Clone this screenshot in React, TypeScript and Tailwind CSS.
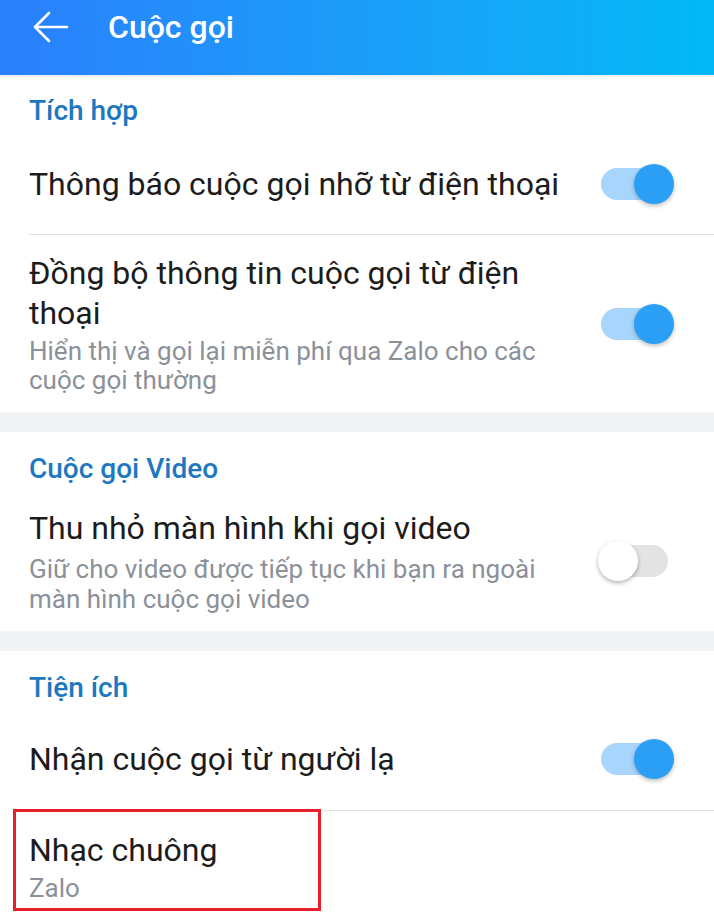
const Toggle = ({ on }: { on: boolean }) => {
  if (on) {
    return (
      <div className="relative w-[76px] h-[40px] mr-[40px] shrink-0">
        <div className="absolute left-[3px] top-[4px] w-[56px] h-[32px] rounded-full bg-[#a7d5fc]" />
        <div className="absolute right-0 top-0 w-[40px] h-[40px] rounded-full bg-[#2b9ef5] shadow-[0_2px_4px_rgba(0,0,0,0.25)]" />
      </div>
    );
  }
  return (
    <div className="relative w-[76px] h-[40px] mr-[40px] shrink-0">
      <div className="absolute left-[2px] top-[4px] w-[68px] h-[32px] rounded-full bg-[#e3e3e3]" />
      <div className="absolute left-0 top-0 w-[40px] h-[40px] rounded-full bg-white shadow-[0_2px_4px_rgba(0,0,0,0.3)]" />
    </div>
  );
};

const SectionTitle = ({ children }: { children: string }) => (
  <div className="pl-[29px] pt-[20px] leading-[34px] text-[28px] font-medium text-[#1d78c1]">
    {children}
  </div>
);

const Gap = () => <div className="h-[20px] bg-[#f2f3f5]" />;

const Divider = () => (
  <div className="ml-[29px] h-px bg-[#e1e1e1]" />
);

const App = () => {
  return (
    <div className="w-[714px] h-[916px] bg-white overflow-hidden font-['Roboto',sans-serif] text-[#1c1c1c]">
      <div className="h-[75px] bg-gradient-to-r from-[#2a7ffc] to-[#01b9f6]">
        <div className="h-[54px] flex items-center text-white">
          <svg
            width="36"
            height="32"
            viewBox="0 0 36 32"
            className="ml-[33px]"
            fill="none"
            stroke="white"
            strokeWidth="2.6"
            strokeLinecap="round"
            strokeLinejoin="round"
          >
            <path d="M34 16H3" />
            <path d="M16 2L2 16l14 14" />
          </svg>
          <span className="ml-[39px] text-[32px] font-medium leading-none">
            Cuộc gọi
          </span>
        </div>
      </div>
      <div className="h-[2px] bg-[#efefef]" />

      <div className="pl-[29px] pt-[17px] pb-[6px] leading-[34px] text-[28px] font-medium text-[#1d78c1]">
        Tích hợp
      </div>
      <div className="h-[100px] flex items-center justify-between pl-[29px]">
        <div className="text-[32px] leading-[40px]">
          Thông báo cuộc gọi nhỡ từ điện thoại
        </div>
        <Toggle on />
      </div>
      <Divider />
      <div className="flex items-center justify-between pl-[29px] pt-[18px] pb-[17px]">
        <div className="w-[540px]">
          <div className="text-[32px] leading-[40px]">
            Đồng bộ thông tin cuộc gọi từ điện thoại
          </div>
          <div className="mt-[4px] text-[26px] leading-[29px] text-[#8b9199]">
            Hiển thị và gọi lại miễn phí qua Zalo cho các cuộc gọi thường
          </div>
        </div>
        <Toggle on />
      </div>

      <Gap />
      <SectionTitle>Cuộc gọi Video</SectionTitle>
      <div className="flex items-center justify-between pl-[29px] pt-[22px] pb-[17px]">
        <div className="w-[540px]">
          <div className="text-[32px] leading-[40px]">
            Thu nhỏ màn hình khi gọi video
          </div>
          <div className="mt-[6px] text-[26px] leading-[30px] text-[#8b9199]">
            Giữ cho video được tiếp tục khi bạn ra ngoài màn hình cuộc gọi video
          </div>
        </div>
        <Toggle on={false} />
      </div>

      <Gap />
      <SectionTitle>Tiện ích</SectionTitle>
      <div className="h-[105px] pt-[3px] flex items-center justify-between pl-[29px]">
        <div className="text-[32px] leading-[40px]">
          Nhận cuộc gọi từ người lạ
        </div>
        <Toggle on />
      </div>
      <Divider />
      <div className="relative pl-[29px] pt-[19px]">
        <div className="text-[32px] leading-[40px]">Nhạc chuông</div>
        <div className="mt-[3px] text-[26px] leading-[30px] text-[#8b9199]">
          Zalo
        </div>
        <div className="absolute left-[13px] top-[-2px] w-[308px] h-[102px] border-[3px] border-[#e8202a]" />
      </div>
    </div>
  );
};

export default App;
